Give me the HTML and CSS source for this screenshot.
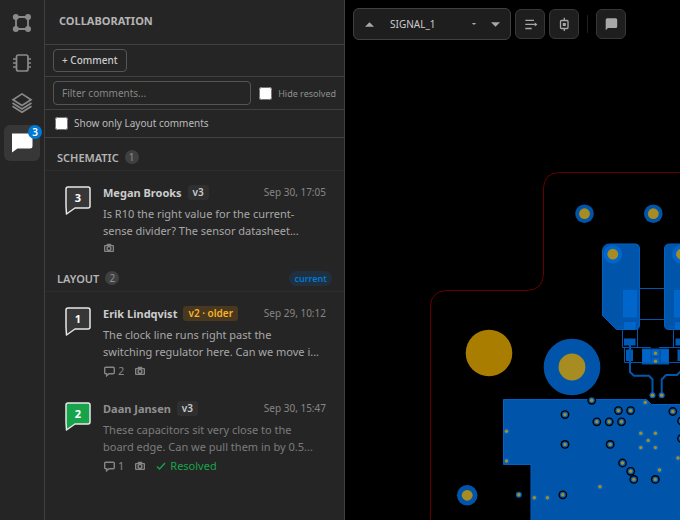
FILE: index.html
```html
<!DOCTYPE html>
<html lang="en">
<head>
<meta charset="utf-8">
<title>Board review</title>
<link rel="stylesheet" href="styles.css">
</head>
<body>
<svg class="defs" aria-hidden="true">
  <symbol id="pin" viewBox="0 0 26 29"><path d="M3 1H23Q25 1 25 3V20Q25 22 23 22H10L1.5 28L1 20V3Q1 1 3 1Z" stroke-width="1.5" stroke-linejoin="round"/></symbol>
  <symbol id="camera" viewBox="0 0 10 10"><path fill-rule="evenodd" d="M3.200 .8H6.800L7.600 2H9Q10 2 10 3V8Q10 9 9 9H1Q0 9 0 8V3Q0 2 1 2H2.400ZM1.300 3.200V7.800H8.700V3.200Z"/><circle cx="5" cy="5.400" r="1.900" fill="none" stroke="currentColor" stroke-width="1.400"/></symbol>
  <symbol id="reply" viewBox="0 0 11 11"><path d="M1.800 1.200H9.200Q10.300 1.200 10.300 2.300V6.700Q10.300 7.800 9.200 7.800H5L2.600 9.800V7.800H1.800Q.7 7.800 .7 6.700V2.300Q.7 1.200 1.800 1.200Z" fill="none" stroke="currentColor" stroke-width="1.400"/></symbol>
</svg>
<div class="app">
  <nav class="rail" aria-label="Views">
    <button class="rail-btn" aria-label="Schematic"><svg viewBox="0 0 20 20"><path d="M4 4H16V16H4Z" fill="none" stroke="currentColor" stroke-width="1.800"/><g fill="currentColor"><circle cx="3.800" cy="4" r="3"/><circle cx="16" cy="4" r="3"/><circle cx="3.800" cy="16" r="3"/><circle cx="16" cy="16" r="3"/></g></svg></button>
    <button class="rail-btn" aria-label="Parts"><svg viewBox="0 0 20 20" fill="none" stroke="currentColor" stroke-width="1.700"><rect x="4.500" y="2" width="11.500" height="16" rx="2"/><path d="M1 6H4M1 10H4M1 14H4M16 6H19M16 10H19M16 14H19"/></svg></button>
    <button class="rail-btn" aria-label="Layers"><svg viewBox="0 0 20 20" fill="none" stroke="currentColor" stroke-width="1.700"><path d="M10 .9L19 6.700L10 12.500L1 6.700Z"/><path d="M.5 10L10 16L19.500 10M.5 13.300L10 19.200L19.500 13.300"/></svg></button>
    <button class="rail-btn active" aria-label="Comments"><svg viewBox="0 0 20 20"><path d="M0 .5H18Q20.500 .5 20.500 3V13Q20.500 15.500 18 15.500H5.500L0 19.500Z" fill="currentColor"/></svg><span class="count-badge">3</span></button>
  </nav>

  <aside class="panel">
    <h1 class="panel-title">COLLABORATION</h1>
    <div class="bar"><button class="add-btn">+ Comment</button></div>
    <div class="bar filter-bar">
      <input class="filter" type="text" placeholder="Filter comments..." aria-label="Filter comments">
      <label class="check small"><input type="checkbox">Hide resolved</label>
    </div>
    <div class="bar only-bar"><label class="check"><input type="checkbox">Show only Layout comments</label></div>

    <section>
      <h2 class="group-title">SCHEMATIC <span class="tally">1</span></h2>
      <div class="list">
        <article class="comment">
          <div class="pin"><svg><use href="#pin"/></svg><span>3</span></div>
          <div class="body">
            <header class="head"><b>Megan Brooks</b><span class="tag">v3</span><time>Sep 30, 17:05</time></header>
            <p>Is R10 the right value for the current-<br>sense divider? The sensor datasheet...</p>
            <footer class="meta"><svg class="camera"><use href="#camera"/></svg></footer>
          </div>
        </article>
      </div>
    </section>

    <section>
      <h2 class="group-title">LAYOUT <span class="tally">2</span><span class="current">current</span></h2>
      <div class="list">
        <article class="comment">
          <div class="pin"><svg><use href="#pin"/></svg><span>1</span></div>
          <div class="body">
            <header class="head"><b>Erik Lindqvist</b><span class="tag older">v2 · older</span><time>Sep 29, 10:12</time></header>
            <p>The clock line runs right past the<br>switching regulator here. Can we move i...</p>
            <footer class="meta"><span class="replies"><svg><use href="#reply"/></svg>2</span><svg class="camera"><use href="#camera"/></svg></footer>
          </div>
        </article>
        <article class="comment resolved">
          <div class="pin"><svg><use href="#pin"/></svg><span>2</span></div>
          <div class="body">
            <header class="head"><b>Daan Jansen</b><span class="tag">v3</span><time>Sep 30, 15:47</time></header>
            <p>These capacitors sit very close to the<br>board edge. Can we pull them in by 0.5...</p>
            <footer class="meta"><span class="replies"><svg><use href="#reply"/></svg>1</span><svg class="camera"><use href="#camera"/></svg><span class="done"><svg viewBox="0 0 10 10"><path d="M1 5.500L3.500 8L9 2" fill="none" stroke="currentColor" stroke-width="1.400"/></svg>Resolved</span></footer>
          </div>
        </article>
      </div>
    </section>
  </aside>

  <main class="stage">
    <svg class="board" viewBox="345 0 335 520" preserveAspectRatio="xMinYMin slice" aria-label="Board layout">
      <path d="M430.500 520V306Q431 291 447 290.500H527Q543 290 543.500 274V188Q544 173 560 172.500H690" fill="none" stroke="#640000"/>
      <circle cx="489" cy="353" r="23.300" fill="#a87d00"/>
      <g fill="#0055aa">
        <circle cx="572" cy="367" r="28.300"/><circle cx="584.500" cy="213.700" r="9.300"/><circle cx="653.300" cy="213.700" r="9.300"/><circle cx="467.200" cy="495.300" r="10.300"/>
        <g stroke="#0062c4">
          <path d="M610 244H635Q639.500 244 639.500 249V325Q639.500 329.500 635 329.500H616.500L602.500 315.500V251Q603 244 610 244Z"/>
          <path d="M690 244H670Q664.500 244 664.500 249V325Q664.500 329.500 669 329.500H690Z"/>
          <path d="M503.500 399.500H646.500L651.500 404.500H690V530H531V464.500H503.500Z"/>
        </g>
      </g>
      <g fill="#0066cc"><circle cx="612.800" cy="254.200" r="9.300"/><circle cx="681.500" cy="254.200" r="9.300"/>
        <path d="M623 290H637V317.500H623ZM674 290H688V317.500H674ZM624 322H635.500V329H624ZM675 322H687V329H675Z"/></g>
      <path d="M624 338.500H635.500V345.500H624ZM675.500 338.500H687V345.500H675.500ZM626 349.500H633V361H626ZM677.500 349.500H685V361H677.500Z" fill="#005bb8"/>
      <path d="M642 348.500H669V364.500H642Z" fill="#0055aa"/>
      <path d="M642.500 349.500H650.500V362.500H642.500ZM661 349.500H668.500V362.500H661ZM652 350H659V356H652ZM652 358H659V363H652Z" fill="#0064c8"/>
      <path d="M690 288.500H620.500V319.500H690M622.500 319.500V347.500M637.500 319.500V347.500M673.500 319.500V347.500M622.500 347.500H651M659 347.500H690M690 362.500H669M642 362.500H624.500V347.500" fill="none" stroke="#0057b0"/>
      <path d="M630 342V372L634 375.800H649L652.500 379.500V395M661.700 395V379.500L666 375H677L682 370" fill="none" stroke="#0057ae" stroke-width="2"/>
      <g fill="#a78c22"><circle cx="572" cy="367" r="13.400"/><circle cx="584.500" cy="213.700" r="5.400"/><circle cx="653.300" cy="213.700" r="5.400"/><circle cx="612.800" cy="254.200" r="5.400"/><circle cx="681.500" cy="254.200" r="5.400"/><circle cx="467.200" cy="495.300" r="5.400"/><circle cx="655.500" cy="353.300" r="1.700"/><circle cx="655.500" cy="361.300" r="1.700"/></g>
      <g id="vias"></g>
    </svg>
    <div class="toolbar">
      <div class="layer">
        <button class="step" aria-label="Previous layer"><svg viewBox="0 0 8 4"><path d="M0 4L4 0L8 4Z"/></svg></button>
        <select aria-label="Layer"><option>SIGNAL_1</option></select>
        <svg class="mark" viewBox="0 0 4 2"><path d="M0 0H4L3 1.500H1Z"/></svg>
        <button class="step" aria-label="Next layer"><svg viewBox="0 0 8 4"><path d="M0 0H8L4 4Z"/></svg></button>
      </div>
      <button class="tool" aria-label="Align"><svg viewBox="0 0 16 16" fill="none" stroke="currentColor" stroke-width="1.400"><path d="M3.300 4.400H12M3.300 8.400H14M3.300 12.500H9.700"/><path d="M12.800 6.400L15.400 8.400L12.800 10.400Z" fill="currentColor" stroke="none"/></svg></button>
      <button class="tool" aria-label="Focus part"><svg viewBox="0 0 16 16" fill="none" stroke="currentColor" stroke-width="1.300"><rect x="4.500" y="4.500" width="7.500" height="8" rx="1"/><path d="M8.300 1.700V4.500M8.300 12.500V15"/><rect x="6.800" y="7" width="3" height="3" fill="currentColor" stroke="none"/></svg></button>
      <span class="divider"></span>
      <button class="tool" aria-label="Add comment"><svg viewBox="0 0 16 16"><path d="M4.200 2.300H12.700Q14.200 2.300 14.200 3.800V10.500Q14.200 12 12.700 12H5L2.700 14.300V3.800Q2.700 2.300 4.200 2.300Z" fill="currentColor"/></svg></button>
    </div>
  </main>
</div>
<script src="board.js"></script>
</body>
</html>
```
FILE: styles.css
```css
* { box-sizing: border-box; }
body { margin: 0; background: #000; color: #ccc; font: 11px/17px "Noto Sans", "Open Sans", sans-serif; }
button, input, select { font: inherit; color: inherit; }
button { padding: 0; cursor: pointer; }
h1, h2, p { margin: 0; }
.defs { position: absolute; width: 0; height: 0; }
.app { display: flex; height: 100vh; overflow: hidden; }

.rail { flex: none; width: 45px; padding: 5px 4px; display: flex; flex-direction: column; gap: 4px; background: #252525; border-right: 1px solid #404040; }
.rail-btn { position: relative; display: grid; place-items: center; width: 36px; height: 36px; border: 0; border-radius: 6px; background: none; color: #8a8a8a; }
.rail-btn svg { width: 20px; height: 20px; overflow: visible; }
.rail-btn.active { background: #373737; color: #fff; }
.count-badge { position: absolute; top: 0; right: -2px; min-width: 14px; height: 14px; border-radius: 7px; background: #0078d4; color: #fff; font-size: 10px; font-weight: 600; line-height: 14px; text-align: center; }

.panel { flex: none; width: 300px; background: #252525; border-right: 1px solid #404040; }
.panel-title { height: 45px; padding: 12px 14px; border-bottom: 1px solid #404040; color: #b4b4b4; font-size: 11px; line-height: 18px; font-weight: 700; }
.bar { display: flex; align-items: center; padding: 4px 8px; border-bottom: 1px solid #404040; }
.add-btn { height: 23px; padding: 0 8px; border: 1px solid #555; border-radius: 4px; background: none; font-size: 10px; font-weight: 500; line-height: 17px; }
.filter-bar { gap: 8px; }
.filter { flex: 1; min-width: 0; height: 24px; padding: 0 8px; border: 1px solid #555; border-radius: 4px; background: none; outline: 0; font-size: 10px; }
.filter::placeholder { color: #858585; }
.check { display: flex; align-items: center; gap: 6px; color: #bbb; font-size: 10px; }
.check input { width: 13px; height: 13px; margin: 0; }
.small { font-size: 9px; color: #909090; }
.only-bar { padding: 5px 10px; }

.group-title { display: flex; align-items: center; height: 33px; padding: 9px 12px 3px; border-bottom: 1px solid #2d2d2d; color: #b4b4b4; font-size: 11px; font-weight: 600; }
.tally { min-width: 14px; height: 14px; margin-left: 6px; border-radius: 7px; background: #404040; color: #909090; font-size: 10px; font-weight: 400; line-height: 14px; text-align: center; }
.current { margin-left: auto; padding: 0 5px; border-radius: 8px; background: #20303e; color: #0078d4; font-size: 9px; line-height: 15px; }
.list { display: flex; flex-direction: column; gap: 3px; }
.comment { display: flex; gap: 12px; padding: 12px 18px 6px 20px; }
.pin { position: relative; flex: none; width: 26px; height: 29px; margin-top: 3px; fill: #373737; stroke: #e8e8e8; }
.pin svg { display: block; width: 26px; height: 29px; }
.pin span { position: absolute; inset: 0 0 6px; color: #fff; font-size: 11px; font-weight: 700; line-height: 23px; text-align: center; }
.body { flex: 1; min-width: 0; }
.head { display: flex; align-items: center; height: 18px; }
.head b { font-weight: 700; }
.head time { margin-left: auto; color: #858585; font-size: 10px; }
.tag { margin-left: 6px; padding: 0 5px; border-radius: 3px; background: #2f2f2f; font-size: 10px; font-weight: 600; line-height: 15px; }
.older { background: #483820; color: #fbb325; }
.body p { margin-top: 4px; color: #a8a8a8; }
.meta { display: flex; align-items: center; gap: 11px; margin-top: 4px; padding-left: 1px; color: #858585; line-height: 14px; }
.camera { width: 10px; height: 10px; fill: currentColor; }
.replies { display: flex; align-items: center; gap: 3px; }
.replies svg { width: 11px; height: 11px; }
.done { display: flex; align-items: center; gap: 4px; color: #16a34a; }
.done svg { width: 10px; height: 10px; }
.resolved .pin { fill: #16a34a; }
.resolved b { color: #909090; }
.resolved p { color: #7c7c7c; }

.stage { position: relative; flex: 1; min-width: 0; overflow: hidden; }
.board { display: block; width: 100%; height: 100%; }
.toolbar { position: absolute; top: 8px; left: 8px; display: flex; align-items: center; gap: 4px; color: #a8a8a8; }
.layer { display: flex; align-items: center; width: 158px; height: 32px; padding: 0 10px; border: 1px solid #404040; border-radius: 6px; background: #1e1e1e; }
.layer svg { fill: currentColor; }
.step { display: grid; place-items: center; width: 10px; height: 24px; border: 0; background: none; }
.step svg { width: 9px; height: 5px; }
.layer select { flex: 1; min-width: 0; margin-left: 16px; padding: 0; border: 0; appearance: none; background: none; color: #ccc; font-size: 10px; }
.mark { width: 4px; height: 2px; margin-right: 14px; }
.tool { display: grid; place-items: center; width: 30px; height: 30px; border: 1px solid #383838; border-radius: 6px; background: #1e1e1e; color: inherit; }
.tool svg { width: 16px; height: 16px; }
.divider { width: 1px; height: 18px; margin: 0 4px; background: #222; }
```
FILE: board.js
```js
// Vias isolated from the copper pour, drawn with a clearance ring.
const isolated = [
  [591.7, 400.3], [565, 414.6], [618.4, 410.6], [630.6, 410.6], [596.8, 421.8], [609.2, 421.8],
  [621.5, 421.8], [565, 444.4], [610.2, 444.4], [622.5, 463], [630.7, 471.3], [633.8, 479.4],
  [655.3, 479.4], [672.8, 411.5], [562.8, 494.8], [681.5, 421], [681.5, 438.5]
];
// Vias tied directly to the pour or to a trace.
const tied = [
  [652.5, 395.3], [661.7, 395.3], [506.5, 431.2], [506.5, 461], [645.3, 402.4], [640.8, 433.2],
  [655.4, 433.2], [648.2, 440.4], [640.8, 447.6], [655.4, 447.6], [678, 458], [659.5, 470],
  [600, 486.7], [534.3, 497.8], [547.4, 497.8], [518.8, 494.8]
];
const circle = (x, y, r, fill) => `<circle cx="${x}" cy="${y}" r="${r}" fill="${fill}"/>`;
const via = ([x, y]) => circle(x, y, 3, "#0062c0") + circle(x, y, 1.7, "#a78c22");
document.getElementById("vias").innerHTML =
  isolated.map(([x, y]) => circle(x, y, 4.4, "#000")).join("") +
  isolated.concat(tied).map(via).join("");
```
